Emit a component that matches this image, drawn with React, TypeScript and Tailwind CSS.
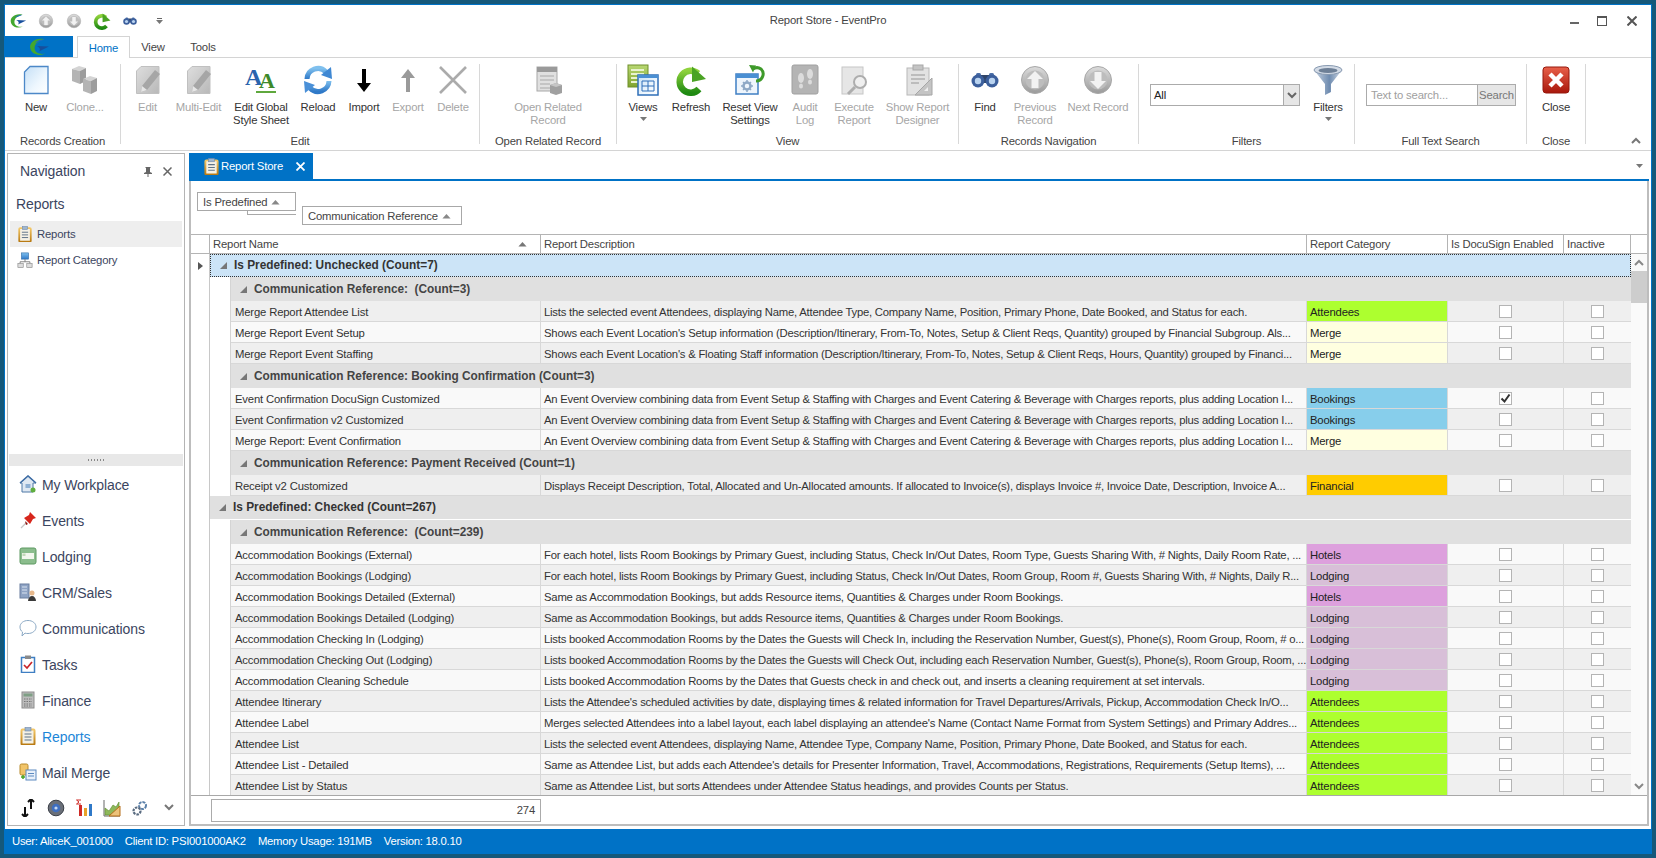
import React from "react";

type IconP = { s?: number };
const B = ({ children, s = 32, v = 32 }: { children: React.ReactNode; s?: number; v?: number }) => (
  <svg width={s} height={s} viewBox={`0 0 ${v} ${v}`} className="shrink-0">{children}</svg>
);

const Defs = () => (
  <svg className="absolute w-0 h-0" aria-hidden="true">
    <defs>
      <linearGradient id="gDoc" x1="0" y1="0" x2="1" y2="1"><stop offset="0" stopColor="#c4dff6" /><stop offset="0.6" stopColor="#eef7fe" /><stop offset="1" stopColor="#ffffff" /></linearGradient>
      <linearGradient id="gGreen" x1="0" y1="0" x2="0" y2="1"><stop offset="0" stopColor="#8fd23c" /><stop offset="1" stopColor="#1f8a12" /></linearGradient>
      <linearGradient id="gBlue" x1="0" y1="0" x2="0" y2="1"><stop offset="0" stopColor="#7fc0ee" /><stop offset="1" stopColor="#2f79c8" /></linearGradient>
      <linearGradient id="gGray" x1="0" y1="0" x2="1" y2="1"><stop offset="0" stopColor="#dedede" /><stop offset="1" stopColor="#b8b8b8" /></linearGradient>
      <linearGradient id="gCirc" x1="0" y1="0" x2="0" y2="1"><stop offset="0" stopColor="#dcdcdc" /><stop offset="1" stopColor="#9a9a9a" /></linearGradient>
      <linearGradient id="gRed" x1="0" y1="0" x2="0" y2="1"><stop offset="0" stopColor="#e8604a" /><stop offset="1" stopColor="#a8170b" /></linearGradient>
      <linearGradient id="gFun" x1="0" y1="0" x2="1" y2="0"><stop offset="0" stopColor="#c9d4e2" /><stop offset="0.55" stopColor="#6f8cb0" /><stop offset="1" stopColor="#d5dde8" /></linearGradient>
      <linearGradient id="gLime" x1="0" y1="0" x2="0" y2="1"><stop offset="0" stopColor="#b9d873" /><stop offset="1" stopColor="#7fa32e" /></linearGradient>
      <linearGradient id="gGold" x1="0" y1="0" x2="0" y2="1"><stop offset="0" stopColor="#f3c766" /><stop offset="1" stopColor="#b97a12" /></linearGradient>
    </defs>
  </svg>
);

const Logo = ({ s = 18 }: IconP) => (
  <B s={s} v={20}>
    <path d="M15 3C7 1 1 6 2 11c1 5 7 8 14 5-6 1-10-1-10-5 0-4 4-7 9-8z" fill="#43a82e" />
    <path d="M15 3c-4 0-7 1-9 4 3-2 6-2 9-4z" fill="#1f6fbf" />
    <path d="M8 9l11 .5-9 4.5c1.500-2 1-3.500-2-5z" fill="#174f9c" />
  </B>
);
const CircleArrow = ({ s = 32, down }: IconP & { down?: boolean }) => (
  <B s={s}>
    <circle cx="16" cy="16" r="13.500" fill="url(#gCirc)" stroke="#a8a8a8" />
    <circle cx="16" cy="16" r="9.500" fill="#bdbdbd" />
    <path d={down ? "M16 25l8-8h-4.500V8h-7v9H8z" : "M16 7l8 8h-4.500v9h-7v-9H8z"} fill="#f2f2f2" />
  </B>
);
const GreenRefresh = ({ s = 32 }: IconP) => (
  <B s={s}>
    <path d="M23 9.500A11 11 0 1 0 24 25" fill="none" stroke="url(#gGreen)" strokeWidth="6.500" />
    <path d="M17 2.500L31 15l-14 3z" fill="#4aa324" />
  </B>
);
const Binoc = ({ s = 32 }: IconP) => (
  <B s={s}>
    <rect x="11" y="11" width="10" height="8" fill="#2f4468" />
    <rect x="7" y="9" width="5" height="5" rx="1.500" fill="#4a6ea8" />
    <rect x="20" y="9" width="5" height="5" rx="1.500" fill="#4a6ea8" />
    <circle cx="9" cy="17" r="6.500" fill="#3c5f9c" />
    <circle cx="23" cy="17" r="6.500" fill="#3c5f9c" />
    <circle cx="9" cy="17" r="3.200" fill="#b9d3f0" />
    <circle cx="23" cy="17" r="3.200" fill="#b9d3f0" />
  </B>
);
const NewDoc = () => (
  <B>
    <path d="M10 2.500h18v27H4.500V8z" fill="url(#gDoc)" stroke="#4c88c8" strokeWidth="1.300" />
  </B>
);
const Cube = ({ x, y }: { x: number; y: number }) => (
  <g transform={`translate(${x} ${y})`}>
    <path d="M0 3l7-3 7 2-6 3z" fill="#d4d4d4" />
    <path d="M0 3l8 2v13l-8-3z" fill="#b4b4b4" />
    <path d="M8 5l6-3v13l-6 3z" fill="#9d9d9d" />
  </g>
);
const Clone = () => (<B><Cube x={3} y={2} /><Cube x={14} y={12} /></B>);
const EditDoc = () => (
  <B>
    <path d="M9 2.500h18v27H4.500V7z" fill="url(#gGray)" stroke="#c0c0c0" />
    <path d="M23 6l5 4-13 16-6 2 1-6z" fill="#a6a6a6" />
    <path d="M10 22l5 4-6 2z" fill="#e6e6e6" />
  </B>
);
const StyleA = () => (
  <B>
    <text x="0" y="21" fontFamily="'Liberation Serif',serif" fontWeight="700" fontSize="24" letterSpacing="0" fill="#2a64ad">A</text>
    <text x="14" y="24" fontFamily="'Liberation Serif',serif" fontWeight="700" fontSize="22" letterSpacing="0" fill="#3d8a2a">A</text>
    <rect x="11" y="27" width="20" height="2" fill="#5fa83d" />
  </B>
);
const Reload = () => (
  <B>
    <path d="M5 15A11 11 0 0 1 24 8" fill="none" stroke="url(#gBlue)" strokeWidth="5" />
    <path d="M19 11l10-8 1 12z" fill="#3f88d3" />
    <path d="M27 17A11 11 0 0 1 8 24" fill="none" stroke="url(#gBlue)" strokeWidth="5" />
    <path d="M13 21L3 29 2 17z" fill="#4a90d8" />
  </B>
);
const ArrowV = ({ up, c }: { up?: boolean; c: string }) => (
  <B>
    <path d={up ? "M16 5l7 9h-5v14h-4V14H9z" : "M16 28l7-9h-5V5h-4v14H9z"} fill={c} />
  </B>
);
const XDel = () => (
  <B><path d="M3 3l26 26M29 3L3 29" stroke="#ababab" strokeWidth="2.600" /></B>
);
const OpenRel = () => (
  <B>
    <rect x="5" y="3" width="20" height="24" fill="#e0e0e0" stroke="#a8a8a8" />
    <rect x="5" y="3" width="20" height="5" fill="#9a9a9a" />
    <path d="M8 12h14M8 16h14M8 20h10M8 24h10" stroke="#a8a8a8" />
    <path d="M18 21l6-2 6 2v8l-6 2-6-2z" fill="#a0a0a0" />
    <path d="M18 21l6 2 6-2-6-2z" fill="#c6c6c6" />
  </B>
);
const Views = () => (
  <B>
    <rect x="1" y="1" width="20" height="22" fill="url(#gLime)" stroke="#6f8f2a" />
    <path d="M4 6h13M4 10h13M4 14h8M4 18h8" stroke="#e9f3cf" strokeWidth="2" />
    <rect x="11" y="11" width="20" height="20" fill="url(#gDoc)" stroke="#2f6fb8" strokeWidth="1.500" />
    <rect x="11" y="11" width="20" height="3" fill="#4a8fd3" />
    <path d="M15 17h12v10H15zM21 17v10M15 22h12" fill="none" stroke="#2f6fb8" />
  </B>
);
const ResetView = () => (
  <B>
    <rect x="2" y="10" width="22" height="20" fill="#eef5fc" stroke="#3f7fc3" strokeWidth="1.500" />
    <rect x="2" y="10" width="22" height="4" fill="#4a8fd3" />
    <circle cx="13" cy="22" r="3.500" fill="none" stroke="#8fa9c6" strokeWidth="2.500" />
    <path d="M13 16v3M13 25v3M7 22h3M16 22h3M9 18l2 2M15 24l2 2M17 18l-2 2M11 24l-2 2" stroke="#8fa9c6" strokeWidth="1.500" />
    <path d="M22 17a7 7 0 0 0 5-12A7 7 0 0 0 19 5" fill="none" stroke="#3e9a2a" strokeWidth="3" />
    <path d="M15 1l7 .5-3 7z" fill="#3e9a2a" />
  </B>
);
const Audit = () => (
  <B>
    <rect x="3" y="1" width="26" height="29" rx="2" fill="#b4b4b4" stroke="#a0a0a0" />
    <ellipse cx="12" cy="14" rx="3" ry="5" fill="#dcdcdc" />
    <ellipse cx="12" cy="22" rx="2" ry="2.500" fill="#dcdcdc" />
    <ellipse cx="21" cy="10" rx="3" ry="5" fill="#dcdcdc" />
    <ellipse cx="21" cy="18" rx="2" ry="2.500" fill="#dcdcdc" />
  </B>
);
const ExecRep = () => (
  <B>
    <rect x="4" y="3" width="21" height="27" fill="#e6e6e6" stroke="#c6c6c6" />
    <circle cx="22" cy="18" r="6" fill="#efefef" stroke="#adadad" strokeWidth="2" />
    <path d="M17 23l-7 7" stroke="#adadad" strokeWidth="3" />
  </B>
);
const ShowRep = () => (
  <B>
    <rect x="5" y="4" width="22" height="27" fill="#e2e2e2" stroke="#b8b8b8" />
    <rect x="11" y="1" width="10" height="5" fill="#c4c4c4" stroke="#a8a8a8" />
    <path d="M9 11h14M9 15h14M9 19h8" stroke="#b0b0b0" strokeWidth="1.500" />
    <path d="M30 14v17H13z" fill="#c4c4c4" stroke="#a6a6a6" />
    <path d="M26 23v4h-4z" fill="#eee" />
  </B>
);
const Funnel = () => (
  <B>
    <path d="M2 6l11 14v11l6-3V20L30 6z" fill="url(#gFun)" />
    <ellipse cx="16" cy="6" rx="14" ry="4.500" fill="#d3dbe6" stroke="#8799b0" />
    <ellipse cx="16" cy="6.500" rx="9.500" ry="2.500" fill="#6d7f96" />
  </B>
);
const CloseRed = () => (
  <B>
    <rect x="3" y="3" width="26" height="26" rx="3" fill="url(#gRed)" stroke="#96180c" />
    <path d="M10 10l12 12M22 10L10 22" stroke="#fff" strokeWidth="4.500" />
  </B>
);
const Clip = ({ s = 18 }: IconP) => (
  <B s={s} v={18}>
    <rect x="2.500" y="2.500" width="13" height="15" rx="1" fill="#f4f1e6" stroke="url(#gGold)" strokeWidth="2" />
    <rect x="6" y="0.500" width="6" height="3.500" fill="#9fb6cf" stroke="#6f88a8" strokeWidth="0.600" />
    <path d="M5.500 7h7M5.500 10h7M5.500 13h7" stroke="#5f7488" strokeWidth="1.100" />
  </B>
);
const OrgIcon = ({ s = 18 }: IconP) => (
  <B s={s} v={18}>
    <rect x="5" y="1" width="8" height="7" fill="url(#gBlue)" stroke="#336ea8" strokeWidth="0.700" />
    <path d="M9 8v3M3.500 13v-2h11v2" fill="none" stroke="#777" />
    <rect x="1" y="13" width="6" height="4.500" fill="#ddd" stroke="#888" strokeWidth="0.700" />
    <rect x="11" y="13" width="6" height="4.500" fill="#ddd" stroke="#888" strokeWidth="0.700" />
  </B>
);
const House = () => (
  <B s={18} v={18}>
    <path d="M9 1L1 8h2v9h11V8h3z" fill="#dfe8f2" stroke="#4f78a6" />
    <path d="M1 8l8-7 8 7" fill="none" stroke="#3f6ea5" strokeWidth="1.600" />
    <rect x="6.500" y="9" width="5" height="4" fill="#8fb0d3" />
    <circle cx="14" cy="15" r="2.500" fill="#5fae3f" />
  </B>
);
const Pin = () => (
  <B s={18} v={18}>
    <path d="M2 17l6-6" stroke="#c4c4c4" strokeWidth="1.300" />
    <path d="M11 1l6 6-3 1-3 5-6-6 5-3z" fill="#d7261c" />
    <path d="M6 10l3 3-2 1z" fill="#8f130c" />
  </B>
);
const Bed = () => (
  <B s={18} v={18}>
    <rect x="1" y="1" width="16" height="16" rx="2" fill="#8bbd8d" stroke="#5e9a63" />
    <rect x="3" y="6" width="12" height="6" fill="#f3f7ee" />
    <rect x="3.500" y="6.500" width="3" height="2.500" fill="#c3d8b8" />
  </B>
);
const Crm = () => (
  <B s={18} v={18}>
    <rect x="1" y="1" width="9" height="14" fill="#8ea3c4" stroke="#6a7f9f" />
    <path d="M3 4h5M3 7h5M3 10h5" stroke="#d8e2ef" />
    <circle cx="13" cy="10" r="2.500" fill="#e8b98c" />
    <path d="M9 18c0-3 2-5 4-5s4 2 4 5z" fill="#3a3a3a" />
  </B>
);
const Bubble = () => (
  <B s={18} v={18}>
    <path d="M9 1.500c4.500 0 8 2.700 8 6.500s-3.500 6.500-8 6.500c-1 0-2 0-3-.4L3 17l.5-4C2 12 1 10 1 8c0-3.800 3.500-6.500 8-6.500z" fill="#fff" stroke="#8aa8c4" />
  </B>
);
const TasksI = () => (
  <B s={18} v={18}>
    <rect x="2.500" y="2.500" width="13" height="15" fill="#fff" stroke="#3f7fc3" strokeWidth="1.500" />
    <rect x="6" y="0.500" width="6" height="3.500" fill="#8a8a8a" />
    <path d="M5 10l3 3 5-6" fill="none" stroke="#c9252a" strokeWidth="1.700" />
  </B>
);
const Calc = () => (
  <B s={18} v={18}>
    <rect x="3" y="1" width="12" height="16" fill="#bcbcbc" stroke="#8e8e8e" />
    <rect x="4.500" y="2.500" width="9" height="3" fill="#7f9f85" />
    <path d="M5 8h8M5 10.500h8M5 13h8M5 15h8" stroke="#777" strokeDasharray="1.500 1" />
  </B>
);
const MailM = () => (
  <B s={18} v={18}>
    <rect x="1" y="1" width="8" height="11" rx="1.500" fill="#f1c469" stroke="#b98a2c" />
    <rect x="7" y="7" width="10" height="10" fill="#e8f0fa" stroke="#5c8ac0" />
    <path d="M9 10.500h6M9 13h6" stroke="#5c8ac0" />
    <path d="M4 12v4M2 14h4" stroke="#4aa324" strokeWidth="1.500" />
  </B>
);
const UpDown = () => (
  <B s={18} v={18}><path d="M6 18V8M3 15l3 3 3-3M12 0v10M9 3l3-3 3 3" fill="none" stroke="#111" strokeWidth="2" /></B>
);
const Globe = () => (
  <B s={18} v={18}>
    <circle cx="9" cy="9" r="7.800" fill="#6a6f78" stroke="#3a3f48" />
    <circle cx="9" cy="9" r="4.300" fill="#3f6fc0" />
    <circle cx="9" cy="9" r="1.600" fill="#c5d8f2" />
  </B>
);
const Chart = () => (
  <B s={18} v={18}>
    <rect x="4" y="6" width="3" height="11" fill="#cf2a26" />
    <rect x="9" y="9" width="3" height="8" fill="#e8a32b" />
    <rect x="14" y="5" width="3" height="12" fill="#2f79c8" />
    <path d="M6 1H1.500L4 3 1.500 5H6" fill="none" stroke="#cf2a26" />
  </B>
);
const Area = () => (
  <B s={18} v={18}>
    <path d="M1 1v16h16" fill="none" stroke="#666" />
    <path d="M2 9l4 3 4-6 3 2 3-5v13H2z" fill="#8db85a" stroke="#5a8a2c" strokeWidth="0.600" />
    <path d="M17 7L6 17h11z" fill="#ecc27b" stroke="#b56f1a" />
  </B>
);
const Gears = () => (
  <B s={18} v={18}>
    <circle cx="11.500" cy="6.500" r="3.500" fill="#fff" stroke="#5a7fa8" strokeWidth="2" strokeDasharray="3 1" />
    <circle cx="6" cy="12" r="3.500" fill="#fff" stroke="#596b80" strokeWidth="2.200" strokeDasharray="2.500 1" />
  </B>
);
const Tri = ({ c = "#777" }: { c?: string }) => (
  <svg width="9" height="9" viewBox="0 0 9 9" className="shrink-0"><path d="M8 1v7H1z" fill={c} /></svg>
);
const SortUp = ({ c = "#888" }: { c?: string }) => (
  <svg width="9" height="5" viewBox="0 0 11 6" className="shrink-0"><path d="M5.500 0l5 5.500H.5z" fill={c} /></svg>
);
const Caret = () => (
  <svg width="7" height="4" viewBox="0 0 7 4"><path d="M0 0h7L3.500 4z" fill="#777" /></svg>
);
const Chev = ({ up, c = "#777" }: { up?: boolean; c?: string }) => (
  <svg width="10" height="7" viewBox="0 0 10 7" className="shrink-0"><path d={up ? "M1 6l4-4 4 4" : "M1 1l4 4 4-4"} fill="none" stroke={c} strokeWidth="2" /></svg>
);

function RB({ w, icon, label, dis, caret }: { w: string; icon: React.ReactNode; label: string[]; dis?: boolean; caret?: boolean }) {
  return (
    <div className={`${w} flex flex-col items-center shrink-0`}>
      <div className="h-8 w-8 flex items-center justify-center">{icon}</div>
      <div className={`mt-[5px] text-center leading-[13px] whitespace-nowrap ${dis ? "text-[#a6a6a6]" : "text-[#333]"}`}>
        {label.map((l) => (<div key={l}>{l}</div>))}
      </div>
      {caret && <div className="mt-[3px]"><Caret /></div>}
    </div>
  );
}

function Group({ w, label, cls = "", children }: { w: string; label: string; cls?: string; children: React.ReactNode }) {
  return (
    <div className={`${w} h-[80px] shrink-0 flex flex-col border-r border-[#d8d8d8]`}>
      <div className={`h-[70px] flex items-start ${cls}`}>{children}</div>
      <div className="h-[10px] text-center leading-[15px] text-[#444] whitespace-nowrap">{label}</div>
    </div>
  );
}

const NAV: [React.ReactNode, string][] = [
  [<House />, "My Workplace"], [<Pin />, "Events"], [<Bed />, "Lodging"], [<Crm />, "CRM/Sales"],
  [<Bubble />, "Communications"], [<TasksI />, "Tasks"], [<Calc />, "Finance"], [<Clip />, "Reports"], [<MailM />, "Mail Merge"],
];

const CAT: Record<string, string> = {
  Attendees: "bg-[#adff2f]", Merge: "bg-[#ffffe0]", Bookings: "bg-[#87ceeb]", Financial: "bg-[#ffcc00]", Hotels: "bg-[#dda0dd]", Lodging: "bg-[#d8bfd8]",
};

type Row =
  | { t: 1; text: string; sel?: boolean }
  | { t: 2; text: string }
  | { t: 0; name: string; desc: string; cat: string; doc?: boolean };

const LA = "Lists the selected event Attendees, displaying Name, Attendee Type, Company Name, Position, Primary Phone, Date Booked, and Status for each.";
const EO = "An Event Overview combining data from Event Setup & Staffing with Charges and Event Catering & Beverage with Charges reports, plus adding Location I...";
const AD = "Same as Accommodation Bookings, but adds Resource items, Quantities & Charges under Room Bookings.";

const ROWS: Row[] = [
  { t: 1, text: "Is Predefined: Unchecked (Count=7)", sel: true },
  { t: 2, text: "Communication Reference:  (Count=3)" },
  { t: 0, name: "Merge Report Attendee List", desc: LA, cat: "Attendees" },
  { t: 0, name: "Merge Report Event Setup", desc: "Shows each Event Location's Setup information (Description/Itinerary, From-To, Notes, Setup & Client Reqs, Quantity) grouped by Financial Subgroup.  Als...", cat: "Merge" },
  { t: 0, name: "Merge Report Event Staffing", desc: "Shows each Event Location's & Floating Staff information (Description/Itinerary, From-To, Notes, Setup & Client Reqs, Hours, Quantity) grouped by Financi...", cat: "Merge" },
  { t: 2, text: "Communication Reference: Booking Confirmation (Count=3)" },
  { t: 0, name: "Event Confirmation DocuSign Customized", desc: EO, cat: "Bookings", doc: true },
  { t: 0, name: "Event Confirmation v2 Customized", desc: EO, cat: "Bookings" },
  { t: 0, name: "Merge Report: Event Confirmation", desc: EO, cat: "Merge" },
  { t: 2, text: "Communication Reference: Payment Received (Count=1)" },
  { t: 0, name: "Receipt v2 Customized", desc: "Displays Receipt Description, Total, Allocated and Un-Allocated amounts. If allocated to Invoice(s), displays Invoice #, Invoice Date, Description, Invoice A...", cat: "Financial" },
  { t: 1, text: "Is Predefined: Checked (Count=267)" },
  { t: 2, text: "Communication Reference:  (Count=239)" },
  { t: 0, name: "Accommodation Bookings (External)", desc: "For each hotel, lists Room Bookings by Primary Guest, including Status, Check In/Out Dates, Room Type, Guests Sharing With, # Nights, Daily Room Rate, ...", cat: "Hotels" },
  { t: 0, name: "Accommodation Bookings (Lodging)", desc: "For each hotel, lists Room Bookings by Primary Guest, including Status, Check In/Out Dates, Room Group, Room #, Guests Sharing With, # Nights, Daily R...", cat: "Lodging" },
  { t: 0, name: "Accommodation Bookings Detailed (External)", desc: AD, cat: "Hotels" },
  { t: 0, name: "Accommodation Bookings Detailed (Lodging)", desc: AD, cat: "Lodging" },
  { t: 0, name: "Accommodation Checking In (Lodging)", desc: "Lists booked Accommodation Rooms by the Dates the Guests will Check In, including the Reservation Number, Guest(s), Phone(s), Room Group, Room, # o...", cat: "Lodging" },
  { t: 0, name: "Accommodation Checking Out (Lodging)", desc: "Lists booked Accommodation Rooms by the Dates the Guests will Check Out, including each Reservation Number, Guest(s), Phone(s), Room Group, Room, ...", cat: "Lodging" },
  { t: 0, name: "Accommodation Cleaning Schedule", desc: "Lists booked Accommodation Rooms by the Dates that Guests check in and check out, and inserts a cleaning requirement at set intervals.", cat: "Lodging" },
  { t: 0, name: "Attendee Itinerary", desc: "Lists the Attendee's scheduled activities by date, displaying times & related information for Travel Departures/Arrivals, Pickup, Accommodation Check In/O...", cat: "Attendees" },
  { t: 0, name: "Attendee Label", desc: "Merges selected Attendees into a label layout, each label displaying an attendee's Name (Contact Name Format from System Settings) and Primary Addres...", cat: "Attendees" },
  { t: 0, name: "Attendee List", desc: LA, cat: "Attendees" },
  { t: 0, name: "Attendee List - Detailed", desc: "Same as Attendee List, but adds each Attendee's details for Presenter Information, Travel, Accommodations, Registrations, Requirements (Setup Items), ...", cat: "Attendees" },
  { t: 0, name: "Attendee List by Status", desc: "Same as Attendee List, but sorts Attendees under Attendee Status headings, and provides Counts per Status.", cat: "Attendees" },
];

const Check = ({ on }: { on?: boolean }) => (
  <div className="w-[13px] h-[13px] bg-white border border-[#b4b4b4] flex items-center justify-center">
    {on && <svg width="11" height="11" viewBox="0 0 11 11"><path d="M1.500 5.500l3 3 5-7" fill="none" stroke="#333" strokeWidth="2" /></svg>}
  </div>
);

function Rows() {
  let n = 0;
  return (
    <>
      {ROWS.map((r, i) => {
        if (r.t === 1) {
          return (
            <div key={i} className={`flex items-center whitespace-pre font-bold text-[11.85px] tracking-normal text-[#333] ${r.sel ? "h-[23px] bg-[#cce4f7] border border-dotted border-[#333]" : "h-[24px] bg-[#e0e0e0] border-b border-white"}`}>
              <div className="ml-[8px] mr-[6px]"><Tri /></div><span className="pt-[1px]">{r.text}</span>
            </div>
          );
        }
        if (r.t === 2) {
          return (
            <div key={i} className="flex h-[24px]">
              <div className="w-[21px] shrink-0 bg-white border-r border-[#d4d4d4]" />
              <div className="flex-1 flex items-center bg-[#e0e0e0] whitespace-pre font-bold text-[11.85px] tracking-normal text-[#444]">
                <div className="ml-[8px] mr-[6px]"><Tri /></div><span className="pt-[1px]">{r.text}</span>
              </div>
            </div>
          );
        }
        const bg = n++ % 2 === 0 ? "bg-[#efefef]" : "bg-[#f9f9f9]";
        return (
          <div key={i} className="flex h-[21px]">
            <div className="w-[21px] shrink-0 bg-white border-r border-[#d4d4d4]" />
            <div className={`w-[310px] shrink-0 ${bg} border-r border-b border-[#d8d8d8] pl-[4px] leading-[22px] overflow-hidden whitespace-nowrap text-[#333]`}>{r.name}</div>
            <div className={`w-[766px] shrink-0 ${bg} border-r border-b border-[#d8d8d8] pl-[3px] leading-[22px] overflow-hidden whitespace-nowrap text-[#333] tracking-[-0.22px]`}>{r.desc}</div>
            <div className={`w-[141px] shrink-0 ${CAT[r.cat]} border-r border-b border-[#d8d8d8] pl-[3px] leading-[22px] text-[#222]`}>{r.cat}</div>
            <div className={`w-[116px] shrink-0 ${bg} border-r border-b border-[#d8d8d8] flex items-center justify-center`}><Check on={r.doc} /></div>
            <div className={`w-[67px] shrink-0 ${bg} border-b border-[#d8d8d8] flex items-center justify-center`}><Check /></div>
          </div>
        );
      })}
    </>
  );
}

export default function App() {
  return (
    <div className="w-[1656px] h-[858px] bg-[#15587a] p-[4px] overflow-hidden font-['Liberation_Sans',Arial,sans-serif] text-[11.3px] tracking-[-0.17px] text-[#333]">
      <Defs />
      <div className="w-[1648px] h-[850px] bg-white border border-[#0072c6] flex flex-col">
        {/* title */}
        <div className="h-[31px] shrink-0 grid grid-cols-[1fr_auto_1fr] items-center">
          <div className="flex items-center pl-[4px]">
            <div className="w-[18px] flex justify-center"><Logo s={18} /></div>
            <div className="w-[28px] ml-[5px] flex justify-center"><CircleArrow s={16} /></div>
            <div className="w-[28px] flex justify-center"><CircleArrow s={16} down /></div>
            <div className="w-[28px] flex justify-center"><GreenRefresh s={18} /></div>
            <div className="w-[28px] flex justify-center"><Binoc s={16} /></div>
            <div className="w-[30px] flex flex-col items-center gap-[1px]"><div className="w-[5px] h-[1px] bg-[#666]" /><Caret /></div>
          </div>
          <div className="text-[#444]">Report Store - EventPro</div>
          <div className="flex items-center justify-end pr-[14px] gap-[16px]">
            <div className="w-[14px] flex justify-center pt-[4px]"><div className="w-[9px] h-[2px] bg-[#666]" /></div>
            <div className="w-[10px] h-[10px] border border-[#555] border-t-[2px]" />
            <svg width="10" height="10" viewBox="0 0 10 10" className="ml-[4px]"><path d="M0.500 0.500l9 9M9.500 0.500l-9 9" stroke="#555" strokeWidth="2" /></svg>
          </div>
        </div>
        {/* tabs */}
        <div className="h-[22px] shrink-0 flex border-b border-[#d4d4d4]">
          <div className="w-[68px] h-[21px] bg-[#0072c6] flex items-center justify-center"><Logo s={22} /></div>
          <div className="ml-[4px] w-[53px] h-[22px] pt-[1px] bg-white border border-b-0 border-[#d4d4d4] flex items-center justify-center text-[#0072c6]">Home</div>
          <div className="w-[46px] pt-[1px] flex items-center justify-center text-[#444]">View</div>
          <div className="w-[54px] pt-[1px] flex items-center justify-center text-[#444]">Tools</div>
        </div>
        {/* ribbon */}
        <div className="h-[93px] shrink-0 flex pt-[6px] border-b border-[#d4d4d4]">
          <Group w="w-[116px]" label="Records Creation" cls="pl-[7px]">
            <RB w="w-[48px]" icon={<NewDoc />} label={["New"]} />
            <RB w="w-[50px]" icon={<Clone />} label={["Clone..."]} dis />
          </Group>
          <Group w="w-[359px]" label="Edit" cls="pl-[1px]">
            <RB w="w-[51px]" icon={<EditDoc />} label={["Edit"]} dis />
            <RB w="w-[51px]" icon={<EditDoc />} label={["Multi-Edit"]} dis />
            <RB w="w-[74px]" icon={<StyleA />} label={["Edit Global", "Style Sheet"]} />
            <RB w="w-[40px]" icon={<Reload />} label={["Reload"]} />
            <RB w="w-[52px]" icon={<ArrowV c="#000" />} label={["Import"]} />
            <RB w="w-[36px]" icon={<ArrowV up c="#9a9a9a" />} label={["Export"]} dis />
            <RB w="w-[54px]" icon={<XDel />} label={["Delete"]} dis />
          </Group>
          <Group w="w-[137px]" label="Open Related Record" cls="justify-center">
            <RB w="w-[90px]" icon={<OpenRel />} label={["Open Related", "Record"]} dis />
          </Group>
          <Group w="w-[342px]" label="View" cls="pl-[4px]">
            <RB w="w-[44px]" icon={<Views />} label={["Views"]} caret />
            <RB w="w-[52px]" icon={<GreenRefresh />} label={["Refresh"]} />
            <RB w="w-[66px]" icon={<ResetView />} label={["Reset View", "Settings"]} />
            <RB w="w-[44px]" icon={<Audit />} label={["Audit", "Log"]} dis />
            <RB w="w-[54px]" icon={<ExecRep />} label={["Execute", "Report"]} dis />
            <RB w="w-[73px]" icon={<ShowRep />} label={["Show Report", "Designer"]} dis />
          </Group>
          <Group w="w-[180px]" label="Records Navigation" cls="pl-[4px]">
            <RB w="w-[44px]" icon={<Binoc />} label={["Find"]} />
            <RB w="w-[56px]" icon={<CircleArrow s={32} />} label={["Previous", "Record"]} dis />
            <RB w="w-[70px]" icon={<CircleArrow s={32} down />} label={["Next Record"]} dis />
          </Group>
          <Group w="w-[216px]" label="Filters" cls="pl-[11px]">
            <div className="w-[150px] h-[22px] mt-[20px] flex border border-[#ababab] shrink-0">
              <div className="flex-1 pl-[3px] leading-[20px] text-[#222]">All</div>
              <div className="w-[16px] bg-[#e6e6e6] border-l border-[#ababab] flex items-center justify-center"><Chev c="#666" /></div>
            </div>
            <div className="ml-[6px]"><RB w="w-[44px]" icon={<Funnel />} label={["Filters"]} caret /></div>
          </Group>
          <Group w="w-[172px]" label="Full Text Search" cls="pl-[11px]">
            <div className="w-[150px] h-[22px] mt-[20px] flex border border-[#ababab] shrink-0">
              <div className="flex-1 pl-[4px] leading-[20px] text-[#a0a0a0]">Text to search...</div>
              <div className="w-[38px] bg-[#e6e6e6] border-l border-[#ababab] text-center leading-[20px] text-[#777]">Search</div>
            </div>
          </Group>
          <Group w="w-[59px]" label="Close" cls="justify-center">
            <RB w="w-[40px]" icon={<CloseRed />} label={["Close"]} />
          </Group>
          <div className="flex-1 flex items-end justify-end pr-[10px] pb-[6px]"><div className="h-[80px] flex items-end"><Chev up /></div></div>
        </div>
        {/* body */}
        <div className="flex-1 min-h-0 flex gap-[4px] pl-[2px] pr-[1px] pt-[2px] pb-[3px]">
          {/* nav */}
          <div className="w-[178px] shrink-0 border border-[#b4b4b4] flex flex-col">
            <div className="h-[35px] shrink-0 flex items-center pl-[12px] pr-[12px] text-[14px] tracking-[-0.1px] text-[#3b4560]">
              <span>Navigation</span>
              <div className="ml-auto flex items-center gap-[11px]">
                <svg width="8" height="10" viewBox="0 0 8 10"><path d="M1.500 0h5v1H6v4l2 1v1H4.500v3h-1V7H0V6l2-1V1h-.5z" fill="#666" /></svg>
                <svg width="9" height="9" viewBox="0 0 9 9"><path d="M0.500 0.500l8 8M8.500 0.500l-8 8" stroke="#666" strokeWidth="1.500" /></svg>
              </div>
            </div>
            <div className="h-[32px] shrink-0 pl-[8px] text-[14px] tracking-[-0.1px] leading-[31px] text-[#3b4560]">Reports</div>
            <div className="mx-[2px] h-[26px] bg-[#eeeeee] flex items-center pl-[7px] gap-[4px] text-[#3b4560]"><Clip s={16} /><span>Reports</span></div>
            <div className="mx-[2px] h-[26px] flex items-center pl-[7px] gap-[4px] text-[#3b4560]"><OrgIcon s={16} /><span>Report Category</span></div>
            <div className="flex-1" />
            <div className="h-[12px] shrink-0 mx-[1px] bg-[#e8e8e8] flex items-center justify-center gap-[1.500px]">
              {[0, 1, 2, 3, 4, 5].map((d) => (<div key={d} className="w-[1.500px] h-[2px] bg-[#888]" />))}
            </div>
            {NAV.map(([ic, t]) => (
              <div key={t} className={`h-[36px] shrink-0 flex items-center pl-[11px] gap-[6px] text-[14px] tracking-[-0.1px] ${t === "Reports" ? "text-[#1c86d8]" : "text-[#3b4560]"}`}>
                <div className="w-[17px] flex justify-center">{ic}</div><span className="pt-[2px]">{t}</span>
              </div>
            ))}
            <div className="h-[35px] shrink-0 flex items-center pl-[11px]">
              <div className="w-[28px] flex"><UpDown /></div>
              <div className="w-[28px] flex"><Globe /></div>
              <div className="w-[28px] flex"><Chart /></div>
              <div className="w-[28px] flex"><Area /></div>
              <div className="w-[28px] flex"><Gears /></div>
              <div className="w-[20px] flex justify-center"><Chev c="#777" /></div>
            </div>
          </div>
          {/* content */}
          <div className="w-[1460px] shrink-0 flex flex-col">
            <div className="h-[26px] shrink-0 flex items-stretch">
              <div className="w-[124px] bg-[#0072c6] flex items-center pl-[14px] text-white">
                <div className="w-[17px]"><Clip s={17} /></div>
                <span className="ml-[1px]">Report Store</span>
                <svg width="9" height="9" viewBox="0 0 9 9" className="ml-[13px]"><path d="M0.500 0.500l8 8M8.500 0.500l-8 8" stroke="#fff" strokeWidth="1.800" /></svg>
              </div>
              <div className="flex-1 flex items-center justify-end pr-[6px]"><Caret /></div>
            </div>
            <div className="h-[2px] shrink-0 bg-[#0072c6]" />
            <div className="flex-1 min-h-0 flex flex-col border-l-2 border-r-2 border-b-2 border-[#bdbdbd]">
              <div className="h-[53px] shrink-0 relative flex items-start pl-[6px] pt-[11px]">
                <div className="w-[99px] h-[19px] border border-[#a8a8a8] flex items-center pl-[5px] pt-[1px] gap-[4px] text-[#444] bg-white">Is Predefined<SortUp /></div>
                <div className="ml-[6px] mt-[14px] w-[160px] h-[19px] border border-[#a8a8a8] flex items-center pl-[5px] pt-[1px] gap-[4px] text-[#444] bg-white">Communication Reference<SortUp /></div>
                <div className="absolute left-[56px] top-[30px] w-[49px] h-[4px] border-l border-b border-[#a8a8a8]" />
              </div>
              {/* header */}
              <div className="h-[20px] shrink-0 flex border-t border-b border-[#b4b4b4] text-[#444] leading-[18px]">
                <div className="w-[19px] shrink-0 border-r border-[#b4b4b4]" />
                <div className="w-[331px] shrink-0 border-r border-[#b4b4b4] pl-[3px] pr-[13px] flex items-center justify-between"><span>Report Name</span><SortUp c="#777" /></div>
                <div className="w-[766px] shrink-0 border-r border-[#b4b4b4] pl-[3px]">Report Description</div>
                <div className="w-[141px] shrink-0 border-r border-[#b4b4b4] pl-[3px]">Report Category</div>
                <div className="w-[116px] shrink-0 border-r border-[#b4b4b4] pl-[3px]">Is DocuSign Enabled</div>
                <div className="w-[67px] shrink-0 border-r border-[#b4b4b4] pl-[3px]">Inactive</div>
              </div>
              {/* grid */}
              <div className="h-[542px] shrink-0 flex border-b border-[#a8a8a8] overflow-hidden">
                <div className="w-[19px] shrink-0 border-r border-[#c8c8c8] pt-[8px] pl-[7px]">
                  <svg width="5" height="8" viewBox="0 0 5 8"><path d="M0 0l5 4-5 4z" fill="#555" /></svg>
                </div>
                <div className="w-[1421px] shrink-0"><Rows /></div>
                <div className="w-[16px] shrink-0 flex flex-col items-center bg-[#fafafa]">
                  <div className="h-[17px] w-full flex items-center justify-center"><Chev up c="#888" /></div>
                  <div className="h-[32px] w-full bg-[#cdcdcd]" />
                  <div className="flex-1" />
                  <div className="h-[17px] w-full flex items-center justify-center"><Chev c="#888" /></div>
                </div>
              </div>
              {/* footer */}
              <div className="flex-1 pl-[20px] pt-[3px]">
                <div className="w-[330px] h-[23px] border border-[#ababab] text-right pr-[5px] leading-[21px] text-[#444]">274</div>
              </div>
            </div>
          </div>
        </div>
        {/* status */}
        <div className="h-[24px] shrink-0 bg-[#0072c6] text-white flex items-center pl-[7px] gap-[12px] whitespace-nowrap tracking-[-0.25px]">
          <span>User: AliceK_001000</span>
          <span>Client ID: PSI001000AK2</span>
          <span>Memory Usage: 191MB</span>
          <span>Version: 18.0.10</span>
        </div>
      </div>
    </div>
  );
}
